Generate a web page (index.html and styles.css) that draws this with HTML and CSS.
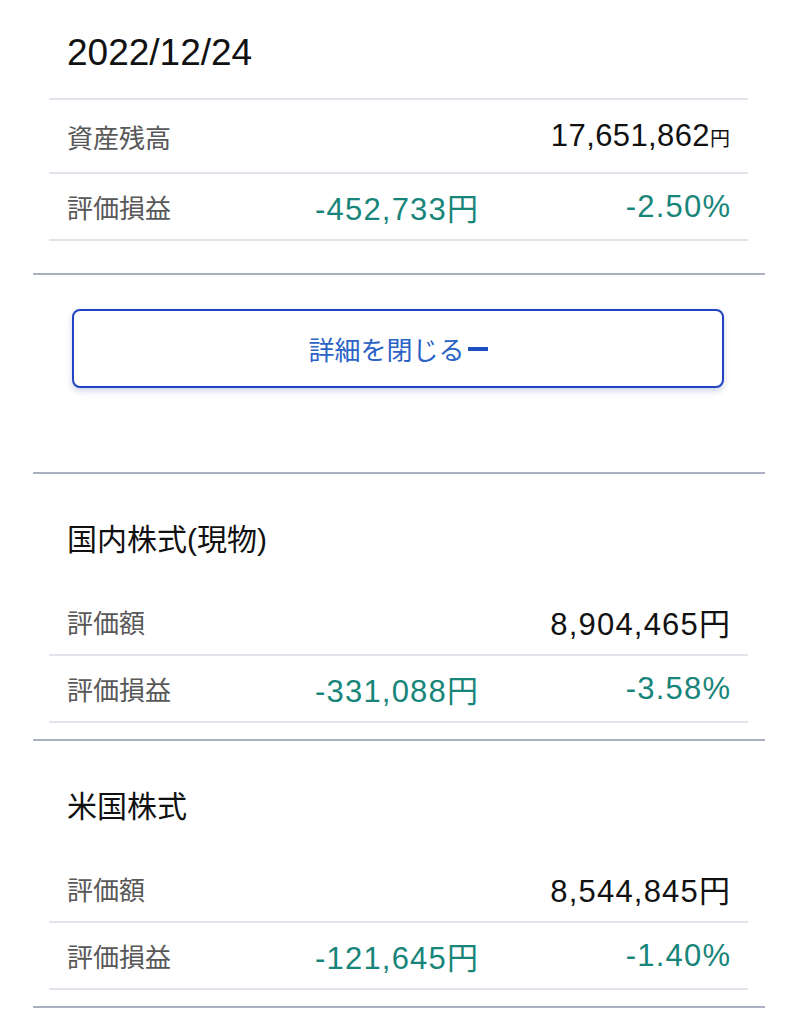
FILE: index.html
```html
<!DOCTYPE html>
<html lang="ja">
<head>
  <meta charset="UTF-8">
  <title>資産残高</title>
  <link rel="stylesheet" href="styles.css">
</head>
<body>
  <div class="page">
    <!-- Summary -->
    <section class="block">
      <div class="date">2022/12/24</div>
      <div class="rows">
        <div class="row row-tall">
          <span class="label">資産残高</span>
          <span class="value total">17,651,862<span class="yen-small">円</span></span>
        </div>
        <div class="row">
          <span class="label">評価損益</span>
          <span class="amount minus">-452,733円</span>
          <span class="pct minus">-2.50%</span>
        </div>
      </div>
    </section>

    <section class="block block-button">
      <button class="toggle" type="button">詳細を閉じる<span class="bar"></span></button>
    </section>

    <!-- Details -->
    <section class="block">
      <h2 class="title">国内株式(現物)</h2>
      <div class="rows rows-open">
        <div class="row">
          <span class="label">評価額</span>
          <span class="value">8,904,465円</span>
        </div>
        <div class="row">
          <span class="label">評価損益</span>
          <span class="amount minus">-331,088円</span>
          <span class="pct minus">-3.58%</span>
        </div>
      </div>
    </section>

    <section class="block">
      <h2 class="title">米国株式</h2>
      <div class="rows rows-open">
        <div class="row">
          <span class="label">評価額</span>
          <span class="value">8,544,845円</span>
        </div>
        <div class="row">
          <span class="label">評価損益</span>
          <span class="amount minus">-121,645円</span>
          <span class="pct minus">-1.40%</span>
        </div>
      </div>
    </section>
  </div>
</body>
</html>
```

FILE: styles.css
```css
body {
  margin: 0;
  background-color: white;
  color: #111;
  font-family: "Liberation Sans", "Noto Sans CJK JP", sans-serif;
}

.page {
  padding: 0 33px;
}

.block {
  border-bottom: 2px solid #aab0bf;
  padding-bottom: 32px;
}

.date {
  padding: 35px 0 27px 34px;
  font-size: 37px;
  line-height: 36px;
}

.rows {
  margin: 0 17px 0 16px;
  border-top: 2px solid #e3e4eb;
}

.rows-open {
  border-top: none;
}

.block + .block .rows {
  margin-bottom: -16px;
}

.row {
  display: grid;
  grid-template-columns: 150px 1fr 252px;
  align-items: center;
  height: 65px;
  padding: 0 18px;
  border-bottom: 2px solid #e3e4eb;
}

.row-tall {
  height: 72px;
}

.label {
  font-size: 26px;
  color: #585858;
}

.value,
.amount,
.pct {
  font-size: 31px;
  letter-spacing: 1.2px;
  margin-right: -1.2px;
  text-align: right;
  white-space: nowrap;
}

.value {
  grid-column: 2 / 4;
}

.total {
  letter-spacing: 0.4px;
  margin-right: 0;
}

.yen-small {
  font-size: 20px;
  letter-spacing: 0;
}

.minus {
  color: #18857a;
}

.block-button {
  padding: 34px 41px 84px 39px;
}

.toggle {
  display: flex;
  align-items: center;
  justify-content: center;
  width: 100%;
  height: 79px;
  background-color: white;
  border: 2px solid #2244c2;
  border-radius: 8px;
  box-shadow: 0 3px 6px rgba(40, 60, 140, 0.22);
  color: #2a62c6;
  font-family: "Noto Sans CJK JP", sans-serif;
  font-size: 26px;
  padding: 0;
  cursor: pointer;
}

.bar {
  display: inline-block;
  width: 20px;
  height: 4px;
  margin-left: 3px;
  background-color: #1d4fc0;
}

.title {
  margin: 0;
  padding: 51px 0 34px 34px;
  font-size: 30px;
  line-height: 30px;
  font-weight: normal;
  color: #111;
}
```
